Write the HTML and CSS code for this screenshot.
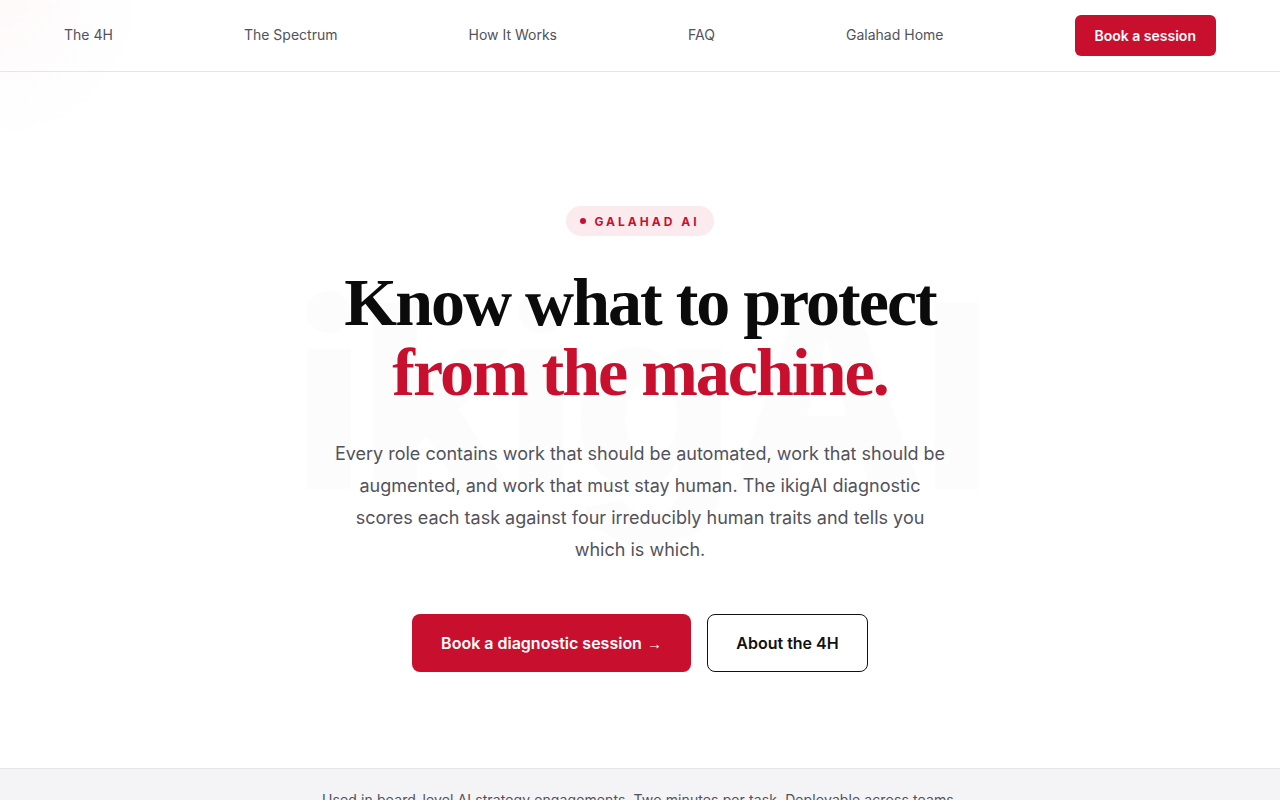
FILE: index.html
```html
<!DOCTYPE html>
<html>
<head>
    <title>Galahad AI - ikigAI diagnostic</title>
    <link rel="stylesheet" href="styles.css">
</head>
<body>
    <nav class="topnav">
        <a href="#four-h">The 4H</a>
        <a href="#spectrum">The Spectrum</a>
        <a href="#how">How It Works</a>
        <a href="#faq">FAQ</a>
        <a href="#home">Galahad Home</a>
        <a href="#book" class="nav-button">Book a session</a>
    </nav>

    <section class="hero">
        <div class="watermark" aria-hidden="true">ikigAI</div>
        <div class="badge"><span class="badge-dot"></span>GALAHAD AI</div>
        <h1>Know what to protect<br><span class="accent">from the machine.</span></h1>
        <p class="lead">Every role contains work that should be automated, work that should be augmented, and work that must stay human. The ikigAI diagnostic scores each task against four irreducibly human traits and tells you which is which.</p>
        <div class="actions">
            <a href="#book" class="btn btn-primary">Book a diagnostic session <span class="arrow">&rarr;</span></a>
            <a href="#four-h" class="btn btn-outline">About the 4H</a>
        </div>
    </section>

    <section class="proof">
        <p>Used in board-level AI strategy engagements. Two minutes per task. Deployable across teams.</p>
    </section>
</body>
</html>
```

FILE: styles.css
```css
body {
    margin: 0;
    font-family: 'Inter', 'Liberation Sans', Arial, sans-serif;
    background-color: #fff;
    color: #111;
    background-image: radial-gradient(circle at 0 0, rgba(200, 16, 46, 0.025), rgba(200, 16, 46, 0) 145px);
    background-repeat: no-repeat;
}
a {
    text-decoration: none;
}
.topnav {
    height: 71px;
    padding: 0 64px;
    display: flex;
    align-items: center;
    justify-content: space-between;
    border-bottom: 1px solid #e6e6e9;
}
.topnav a {
    font-size: 14px;
    line-height: 18px;
    color: #52525b;
    margin-top: -2px;
}
.topnav .nav-button {
    background-color: #c8102e;
    color: #fff;
    font-weight: 600;
    padding: 0 20px;
    height: 41px;
    line-height: 41px;
    border-radius: 6px;
    margin-top: 0;
}
.hero {
    position: relative;
    overflow: hidden;
    padding: 134px 0 96px;
    display: flex;
    flex-direction: column;
    align-items: center;
    text-align: center;
}
.watermark {
    position: absolute;
    top: 196px;
    left: 0;
    right: 0;
    text-align: center;
    font-size: 256px;
    font-weight: 800;
    letter-spacing: -6px;
    color: #fcfcfc;
    line-height: 1;
    z-index: 0;
}
.badge,
.hero h1,
.lead,
.actions {
    position: relative; /* keep above the watermark */
    z-index: 1;
}
.badge {
    display: flex;
    align-items: center;
    gap: 8px;
    height: 30px;
    padding: 0 14px;
    border-radius: 15px;
    background-color: #fcebee;
    color: #c8102e;
    font-size: 12px;
    font-weight: 700;
    letter-spacing: 3px;
}
.badge-dot {
    width: 6px;
    height: 6px;
    border-radius: 50%;
    background-color: #c8102e;
}
.hero h1 {
    margin: 31px 0 0;
    font-family: 'Liberation Serif', 'Times New Roman', serif;
    font-size: 68px;
    line-height: 70px;
    font-weight: 700;
    letter-spacing: -2px;
    color: #0b0b0b;
}
.accent {
    color: #c8102e;
}
.lead {
    margin: 31px 0 0;
    max-width: 616px;
    font-size: 18px;
    line-height: 32px;
    color: #52525b;
}
.actions {
    margin-top: 48px;
    display: flex;
    gap: 16px;
}
.btn {
    height: 58px;
    box-sizing: border-box;
    display: flex;
    align-items: center;
    justify-content: center;
    gap: 5px;
    border-radius: 8px;
    font-size: 16px;
    font-weight: 600;
}
.btn-primary {
    width: 279px;
    background-color: #c8102e;
    color: #fff;
}
.arrow {
    font-family: 'Liberation Sans', Arial, sans-serif;
    font-weight: 400;
    font-size: 15px;
}
.btn-outline {
    width: 161px;
    border: 1px solid #111;
    color: #111;
    background-color: #fff;
}
.proof {
    border-top: 1px solid #e4e4e7;
    background-color: #f4f4f6;
    padding: 22px 0 24px;
    text-align: center;
}
.proof p {
    margin: 0;
    font-size: 14px;
    letter-spacing: 0.1px;
    color: #52525b;
}
```
